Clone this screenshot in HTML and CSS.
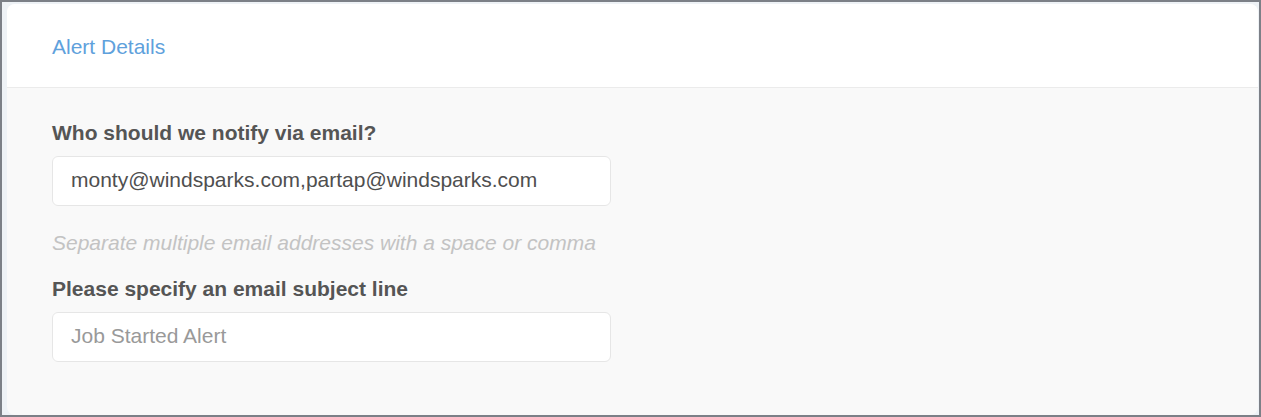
FILE: index.html
```html
<!DOCTYPE html>
<html>
<head>
<meta charset="utf-8">
<link rel="stylesheet" href="styles.css">
</head>
<body>
<div class="frame">
  <div class="card">
    <div class="card-header">
      <div class="title">Alert Details</div>
    </div>
    <div class="card-body">
      <label class="label">Who should we notify via email?</label>
      <div class="input">monty@windsparks.com,partap@windsparks.com</div>
      <div class="help">Separate multiple email addresses with a space or comma</div>
      <label class="label label-2">Please specify an email subject line</label>
      <div class="input placeholder">Job Started Alert</div>
    </div>
  </div>
</div>
</body>
</html>
```
FILE: styles.css
```css
html, body {
  margin: 0;
  padding: 0;
  background: #ffffff;
}
body {
  font-family: "Liberation Sans", Arial, sans-serif;
}
.frame {
  width: 1261px;
  height: 417px;
  box-sizing: border-box;
  border: 2px solid #7c8087;
  background: #eef2f6;
  padding: 2px 1px 0 5px;
  display: flex;
  flex-direction: column;
  overflow: hidden;
}
.card {
  flex: 1;
  background: #f9f9f9;
  border-radius: 8px;
  overflow: hidden;
  display: flex;
  flex-direction: column;
}
.card-header {
  background: #ffffff;
  padding: 31px 45px 28px;
  border-bottom: 1px solid #ebebeb;
}
.title {
  font-size: 21px;
  line-height: 24px;
  color: #5fa1dc;
}
.card-body {
  padding: 33px 45px 0;
  display: flex;
  flex-direction: column;
  align-items: flex-start;
}
.label {
  display: block;
  font-size: 21px;
  line-height: 24px;
  font-weight: bold;
  color: #555555;
}
.label-2 {
  margin-top: 22px;
}
.input {
  margin-top: 11px;
  width: 559px;
  height: 50px;
  box-sizing: border-box;
  background: #ffffff;
  border: 1px solid #e6e6e6;
  border-radius: 6px;
  padding: 0 18px;
  font-size: 21px;
  line-height: 46px;
  color: #4f4f4f;
}
.placeholder {
  color: #999999;
}
.help {
  margin-top: 25px;
  font-size: 21px;
  line-height: 24px;
  font-style: italic;
  color: #c3c3c3;
}
```
